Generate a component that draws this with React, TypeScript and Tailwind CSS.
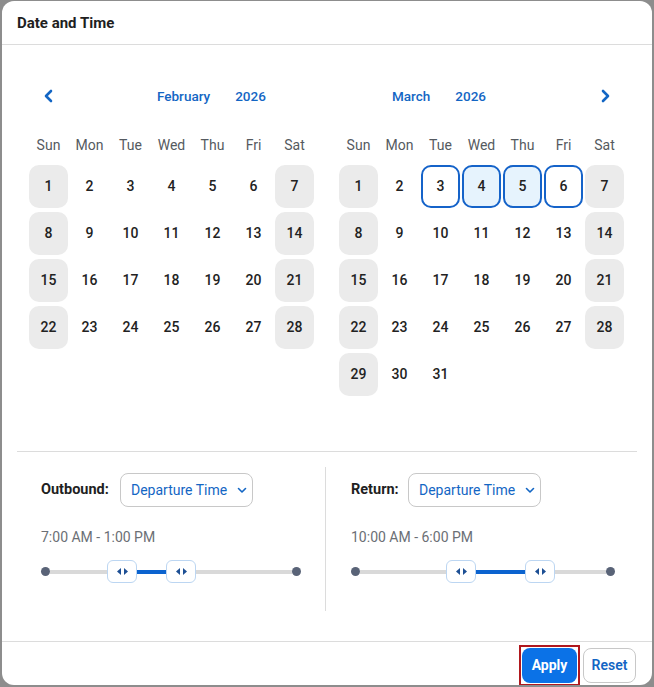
import React from "react";

const FONT = { fontFamily: "Roboto, 'Noto Sans', 'Liberation Sans', sans-serif" };

const dayNames = ["Sun", "Mon", "Tue", "Wed", "Thu", "Fri", "Sat"];

function Chevron({ dir }: { dir: "left" | "right" }) {
  return (
    <svg width="12" height="14" viewBox="0 0 12 14" fill="none">
      {dir === "left" ? (
        <path d="M8 2 L3 7 L8 12" stroke="#1366c4" strokeWidth="2.6" strokeLinecap="round" strokeLinejoin="round" />
      ) : (
        <path d="M4 2 L9 7 L4 12" stroke="#1366c4" strokeWidth="2.6" strokeLinecap="round" strokeLinejoin="round" />
      )}
    </svg>
  );
}

function Month({ days, selected, light }: { days: number; selected: number[]; light: number[] }) {
  const cells = Array.from({ length: days }, (_, i) => i + 1);
  return (
    <div>
      <div className="grid grid-cols-[repeat(7,39px)] gap-x-[2px] h-5 items-center">
        {dayNames.map((d) => (
          <div key={d} className="text-center text-[14px] text-[#555a60]">
            {d}
          </div>
        ))}
      </div>
      <div className="mt-[10px] grid grid-cols-[repeat(7,39px)] auto-rows-[43px] gap-x-[2px] gap-y-[4px]">
        {cells.map((d, i) => {
          const col = i % 7;
          const weekend = col === 0 || col === 6;
          const sel = selected.includes(d);
          const lt = light.includes(d);
          let cls = "flex items-center justify-center rounded-[10px] text-[14px] font-medium text-[#222]";
          if (sel) {
            cls += " border-2 border-[#1563c9] " + (lt ? "bg-[#e6f3fd]" : "bg-white");
          } else if (weekend) {
            cls += " bg-[#ebebeb]";
          }
          return (
            <div key={d} className={cls}>
              {d}
            </div>
          );
        })}
      </div>
    </div>
  );
}

function Handle() {
  return (
    <div className="w-[30px] h-[23px] shrink-0 rounded-md border border-[#bcd6f2] bg-white flex items-center justify-center gap-[3px]">
      <svg width="4" height="7" viewBox="0 0 4 7">
        <path d="M4 0 L0 3.5 L4 7 Z" fill="#1d4f94" />
      </svg>
      <svg width="4" height="7" viewBox="0 0 4 7">
        <path d="M0 0 L4 3.5 L0 7 Z" fill="#1d4f94" />
      </svg>
    </div>
  );
}

function Slider({ a, b }: { a: number; b: number }) {
  return (
    <div className="flex items-center h-[23px]">
      <div className="w-[9px] h-[9px] rounded-full bg-[#596377] shrink-0" />
      <div className="h-[4px] bg-[#d9d9d9] shrink-0" style={{ width: a }} />
      <Handle />
      <div className="h-[4px] bg-[#0b63cf] shrink-0" style={{ width: b }} />
      <Handle />
      <div className="h-[4px] bg-[#d9d9d9] flex-1" />
      <div className="w-[9px] h-[9px] rounded-full bg-[#596377] shrink-0" />
    </div>
  );
}

function Dropdown() {
  return (
    <div className="h-[34px] w-[133px] rounded-lg border border-[#c8c8c8] flex items-center pl-[10px] gap-[10px] text-[14px] text-[#1366c4] whitespace-nowrap">
      <span>Departure Time</span>
      <svg width="10" height="7" viewBox="0 0 10 7" fill="none" className="shrink-0">
        <path d="M1.5 1.5 L5 5 L8.5 1.5" stroke="#1366c4" strokeWidth="1.6" strokeLinecap="round" strokeLinejoin="round" />
      </svg>
    </div>
  );
}

export default function App() {
  return (
    <div className="w-[654px] h-[687px] bg-[#8d8d8d] px-[2px] pb-[2px] pt-[1px]" style={FONT}>
      <div className="w-full h-full bg-white rounded-[12px] flex flex-col overflow-hidden">
        <div className="h-[44px] border-b border-[#dcdcdc] flex items-center pl-[15px] pt-[1px] shrink-0">
          <span className="text-[15px] font-bold text-[#1f1f1f]">Date and Time</span>
        </div>

        <div className="flex pl-[27px] pt-[39px] gap-[25px] h-[406px] shrink-0">
          <div className="w-[285px]">
            <div className="h-6 flex items-center">
              <div className="w-[39px] flex justify-center"><Chevron dir="left" /></div>
              <span className="ml-[89px] text-[13.5px] font-medium text-[#1366c4]">February</span>
              <span className="ml-[25px] text-[13.5px] font-medium text-[#1366c4]">2026</span>
            </div>
            <div className="mt-[27px]">
              <Month days={28} selected={[]} light={[]} />
            </div>
          </div>
          <div className="w-[285px]">
            <div className="h-6 flex items-center">
              <span className="ml-[53px] text-[13.5px] font-medium text-[#1366c4]">March</span>
              <span className="ml-[25px] text-[13.5px] font-medium text-[#1366c4]">2026</span>
              <div className="ml-auto w-[39px] flex justify-center"><Chevron dir="right" /></div>
            </div>
            <div className="mt-[27px]">
              <Month days={31} selected={[3, 4, 5, 6]} light={[4, 5]} />
            </div>
          </div>
        </div>

        <div className="mx-[15px] border-t border-[#dcdcdc] flex pt-[15px] h-[190px] shrink-0">
          <div className="w-[309px] border-r border-[#dcdcdc] pl-[24px] pr-[24px] h-[144px]">
            <div className="flex items-center pt-[6px]">
              <span className="w-[79px] shrink-0 text-[14.5px] font-bold text-[#1f1f1f]">Outbound:</span>
              <Dropdown />
            </div>
            <div className="mt-[20px] text-[14px] text-[#6b6f75]">7:00 AM - 1:00 PM</div>
            <div className="mt-[12px]">
              <Slider a={57} b={29} />
            </div>
          </div>
          <div className="flex-1 pl-[25px] pr-[22px]">
            <div className="flex items-center pt-[6px]">
              <span className="w-[57px] shrink-0 text-[14.5px] font-bold text-[#1f1f1f]">Return:</span>
              <Dropdown />
            </div>
            <div className="mt-[20px] text-[14px] text-[#6b6f75]">10:00 AM - 6:00 PM</div>
            <div className="mt-[12px]">
              <Slider a={86} b={49} />
            </div>
          </div>
        </div>

        <div className="flex-1 border-t border-[#dcdcdc] flex items-start justify-end pr-[16px] pt-[5px] gap-[6px]">
          <div className="outline outline-2 outline-offset-[1px] outline-[#b0181e] mt-[1px]">
            <button className="w-[55px] h-[35px] rounded-lg bg-[#0b72e7] text-white text-[14px] font-bold">Apply</button>
          </div>
          <button className="mt-[1px] w-[53px] h-[35px] rounded-lg border border-[#c8c8c8] bg-white text-[#1366c4] text-[14px] font-semibold">Reset</button>
        </div>
      </div>
    </div>
  );
}
